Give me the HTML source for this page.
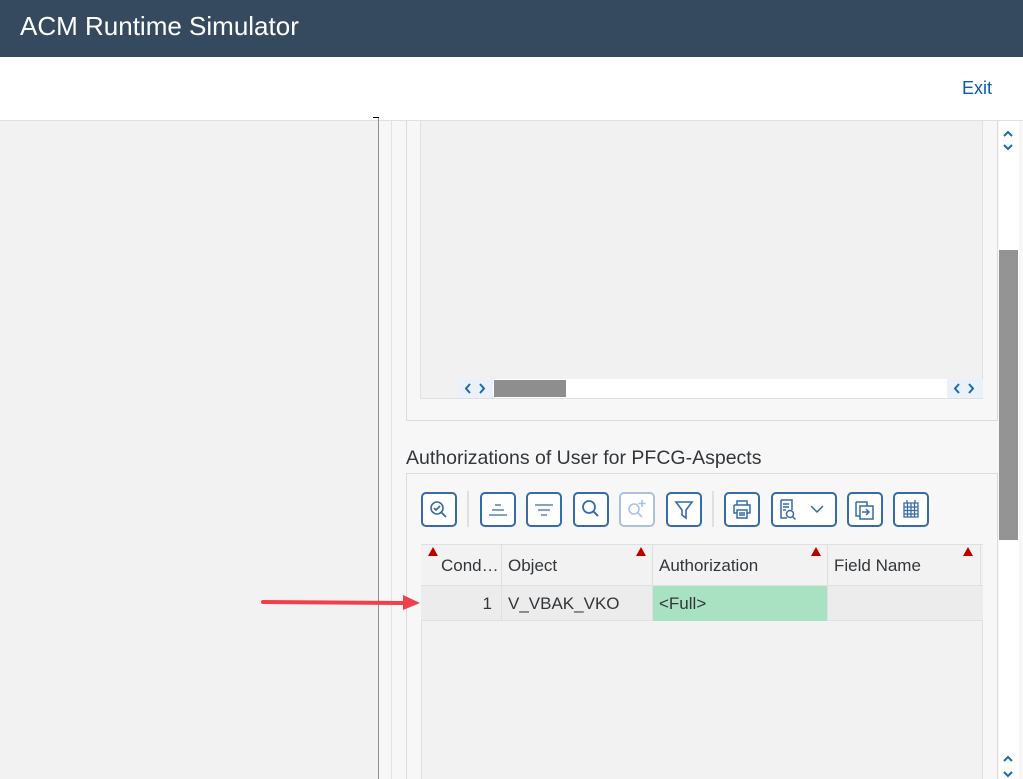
<!DOCTYPE html>
<html><head><meta charset="utf-8"><style>
*{box-sizing:border-box;margin:0;padding:0}
body{width:1023px;height:779px;overflow:hidden;position:relative;background:#f7f7f7;font-family:"Liberation Sans",Arial,sans-serif;color:#32363a}
.a{position:absolute}
.btn{position:absolute;top:492px;height:35px;border:2px solid #346ba8;border-radius:5px;background:#fff}
.btn svg{position:absolute;left:0;top:0}
.sep{position:absolute;top:491px;width:2px;height:36px;background:#e0e0e0}
.tri{position:absolute;width:0;height:0;border-left:5px solid transparent;border-right:5px solid transparent;border-bottom:9px solid #bb0000}
.hc{position:absolute;top:545px;height:41px;border-right:1px solid #e0e0e0;font-size:17px;line-height:41px;padding-left:6px}
.rc{position:absolute;top:586px;height:35px;border-right:1px solid #e0e0e0;font-size:17px;line-height:35px;padding-left:6px}
</style></head><body>
<div class="a" style="left:0;top:0;width:1023px;height:57px;background:#354a5f"></div>
<div class="a" style="left:20px;top:9px;font-size:26px;color:#fff;line-height:34px">ACM Runtime Simulator</div>
<div class="a" style="left:0;top:57px;width:1023px;height:64px;background:#fff;border-bottom:1px solid #e0e0e0"></div>
<div class="a" style="left:962px;top:78px;font-size:18px;color:#0a5ba6">Exit</div>
<div class="a" style="left:0;top:121px;width:378px;height:658px;background:#f2f2f2"></div>
<div class="a" style="left:378px;top:117px;width:1px;height:662px;background:#8a8f96"></div>
<div class="a" style="left:373px;top:117px;width:6px;height:1px;background:#000"></div>
<div class="a" style="left:391px;top:121px;width:1px;height:658px;background:#e3e3e3"></div>
<!-- top box -->
<div class="a" style="left:406px;top:121px;width:592px;height:300px;border:1px solid #dcdcdc;border-top:none;background:#f7f7f7"></div>
<div class="a" style="left:420px;top:121px;width:563px;height:278px;background:#f1f1f1;border:1px solid #e0e0e0;border-top:none"></div>
<div class="a" style="left:458px;top:379px;width:525px;height:19px;background:#fff"></div>
<div class="a" style="left:458px;top:379px;width:35px;height:19px;background:#eaf1f8"></div>
<svg class="a" style="left:458px;top:379px" width="35" height="19"><path d="M12 5l-4 4.5 4 4.5M22 5l4 4.5-4 4.5" stroke="#1b69b6" stroke-width="2" fill="none"/></svg>
<div class="a" style="left:947px;top:379px;width:36px;height:19px;background:#eaf1f8"></div>
<svg class="a" style="left:947px;top:379px" width="36" height="19"><path d="M12 5l-4 4.5 4 4.5M22 5l4 4.5-4 4.5" stroke="#1b69b6" stroke-width="2" fill="none"/></svg>
<div class="a" style="left:494px;top:380px;width:72px;height:17px;background:#8e8e8e"></div>
<!-- vertical scrollbar -->
<div class="a" style="left:999px;top:121px;width:20px;height:658px;background:#fff"></div>
<div class="a" style="left:999px;top:250px;width:19px;height:290px;background:#949494"></div>
<svg class="a" style="left:1001px;top:125px" width="14" height="28"><path d="M3 11 L7 7 L11 11 M3 20 L7 24 L11 20" stroke="#1b69b6" stroke-width="2" fill="none"/></svg>
<svg class="a" style="left:1001px;top:750px" width="14" height="28"><path d="M3 11 L7 7 L11 11 M3 22 L7 26 L11 22" stroke="#1b69b6" stroke-width="2" fill="none"/></svg>
<div class="a" style="left:406px;top:447px;font-size:19.5px;color:#32363a">Authorizations of User for PFCG-Aspects</div>
<div class="a" style="left:406px;top:473px;width:592px;height:306px;border:1px solid #dcdcdc;border-bottom:none;background:#f7f7f7"></div>
<!-- toolbar -->
<div class="btn" style="left:421px;width:36px"><svg width="32" height="31"><circle cx="14" cy="14" r="6" stroke="#346ba8" stroke-width="1.6" fill="none"/><path d="M11 14l2 2 4-4M18 18l5 5" stroke="#346ba8" stroke-width="1.8" fill="none"/></svg></div>
<div class="sep" style="left:467px"></div>
<div class="btn" style="left:480px;width:36px"><svg width="32" height="31"><path d="M13 11h6M10 16h12M7 21h18" stroke="#346ba8" stroke-width="1.3"/></svg></div>
<div class="btn" style="left:526px;width:36px"><svg width="32" height="31"><path d="M7 11h18M10 16h12M13 21h6" stroke="#346ba8" stroke-width="1.3"/></svg></div>
<div class="btn" style="left:573px;width:36px"><svg width="32" height="31"><circle cx="14" cy="13" r="6" stroke="#346ba8" stroke-width="1.8" fill="none"/><path d="M18 17l5 5" stroke="#346ba8" stroke-width="2"/></svg></div>
<div class="btn" style="left:619px;width:36px;border-color:#a9c3df"><svg width="32" height="31"><circle cx="13" cy="15" r="5" stroke="#a9c3df" stroke-width="1.6" fill="none"/><path d="M17 19l4 4M21 6v7M17.5 9.5h7" stroke="#a9c3df" stroke-width="1.6"/></svg></div>
<div class="btn" style="left:666px;width:36px"><svg width="32" height="31"><path d="M8 8h16l-6 8v8l-4-3v-5z" stroke="#346ba8" stroke-width="1.6" fill="none"/></svg></div>
<div class="sep" style="left:712px"></div>
<div class="btn" style="left:724px;width:36px"><svg width="32" height="31"><path d="M11 11V7h10v4M8 11h16v8h-3M11 19H8v-8M11 16h10v8H11z M13 19h6M13 21h6" stroke="#346ba8" stroke-width="1.5" fill="none"/></svg></div>
<div class="btn" style="left:771px;width:66px"><svg width="62" height="31"><path d="M8 6h11v10M8 6v18h6M10 10h6M10 13h6M10 16h3" stroke="#346ba8" stroke-width="1.5" fill="none"/><circle cx="17" cy="20" r="3.5" stroke="#346ba8" stroke-width="1.5" fill="none"/><path d="M19.5 22.5l3 3M38 12l6 6 6-6" stroke="#346ba8" stroke-width="1.5" fill="none"/></svg></div>
<div class="btn" style="left:847px;width:36px"><svg width="32" height="31"><path d="M7 8h11v4M7 8v14h4M11 12h13v13H11z" stroke="#346ba8" stroke-width="1.5" fill="none"/><path d="M13 18h7M17 15l3 3-3 3" stroke="#346ba8" stroke-width="1.5" fill="none"/></svg></div>
<div class="btn" style="left:893px;width:36px"><svg width="32" height="31"><path d="M9 9h14v14H9zM9 13h14M9 16.5h14M9 20h14M12.5 9v14M16 9v14M19.5 9v14M12 6v3M20 6v3" stroke="#346ba8" stroke-width="1.3" fill="none"/></svg></div>
<!-- table -->
<div class="a" style="left:421px;top:544px;width:562px;height:235px;background:#f2f2f2;border:1px solid #e0e0e0;border-bottom:none"></div>
<div class="a" style="left:421px;top:545px;width:562px;height:41px;background:#f2f2f2;border-bottom:1px solid #e0e0e0"></div>
<div class="hc" style="left:421px;width:81px;padding-left:20px;top:545px">Cond…</div>
<div class="hc" style="left:502px;width:151px">Object</div>
<div class="hc" style="left:653px;width:175px">Authorization</div>
<div class="hc" style="left:828px;width:153px">Field Name</div>
<div class="tri" style="left:428px;top:547px"></div>
<div class="tri" style="left:636px;top:547px"></div>
<div class="tri" style="left:811px;top:547px"></div>
<div class="tri" style="left:963px;top:547px"></div>
<div class="a" style="left:421px;top:586px;width:562px;height:35px;background:#ececec;border-bottom:1px solid #e0e0e0"></div>
<div class="rc" style="left:421px;width:81px;text-align:right;padding-right:9px">1</div>
<div class="rc" style="left:502px;width:151px">V_VBAK_VKO</div>
<div class="rc" style="left:653px;width:175px;background:#a9e2c3">&lt;Full&gt;</div>
<!-- arrow -->
<svg class="a" style="left:255px;top:590px" width="170" height="26"><path d="M8 12 L150 13" stroke="#f0404a" stroke-width="4" stroke-linecap="round"/><path d="M148 5 L165 13 L148 20z" fill="#f0404a"/></svg>
</body></html>
